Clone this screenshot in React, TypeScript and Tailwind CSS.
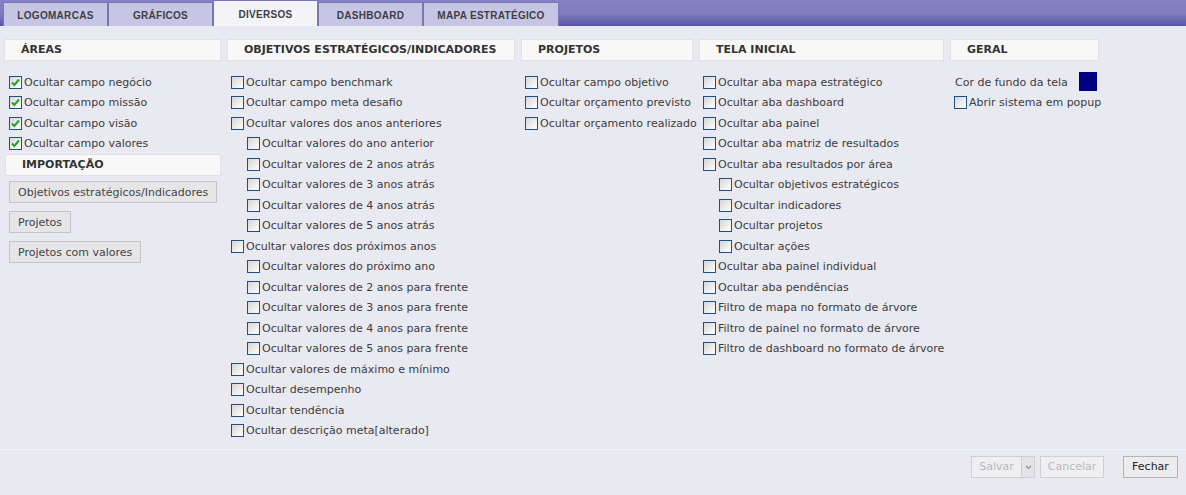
import React from 'react'

const font = { fontFamily: '"DejaVu Sans", Verdana, sans-serif' }

function Box({ checked = false }: { checked?: boolean }) {
  return (
    <span className="relative inline-block w-[13px] h-[13px] border border-[#1e4f86] bg-gradient-to-br from-[#d6d6d6] to-white shrink-0">
      {checked && (
        <svg viewBox="0 0 11 11" className="absolute left-0 top-0 w-[11px] h-[11px]">
          <path d="M2 5.5 L4.3 8 L9 2.5" fill="none" stroke="#22a02a" strokeWidth="2" />
        </svg>
      )}
    </span>
  )
}

function Row({ label, checked, sub }: { label: string; checked?: boolean; sub?: boolean }) {
  return (
    <div className={`flex items-center h-[20.5px] gap-[2px] ${sub ? 'pl-4' : ''}`}>
      <Box checked={checked} />
      <span className="whitespace-nowrap text-[11px] text-[#3c3c3c] leading-none">{label}</span>
    </div>
  )
}

function Head({ title, className = '' }: { title: string; className?: string }) {
  return (
    <div className={`h-[22px] flex items-center pl-4 bg-[#f8f8f8] border border-[#e0e0e6] text-[11px] font-bold text-[#333] ${className}`}>
      {title}
    </div>
  )
}

function Btn({ label }: { label: string }) {
  return (
    <button className="h-[22px] px-2 bg-[#e6e6e8] border border-[#c4c4c8] text-[11px] text-[#444] leading-none self-start">
      {label}
    </button>
  )
}

const tabs = ['LOGOMARCAS', 'GRÁFICOS', 'DIVERSOS', 'DASHBOARD', 'MAPA ESTRATÉGICO']

export default function App() {
  return (
    <div style={font} className="w-[1186px] h-[495px] bg-[#e9e9f1] flex flex-col overflow-hidden">
      <div className="h-[26px] bg-gradient-to-b from-[#8482c0] via-[#807ebe] to-[#5a56a8] flex items-end pl-[3px]">
        {tabs.map((t, i) => (
          <div
            key={t}
            className={`flex items-center justify-center pt-[1px] border-x border-t border-[#7876b8] text-[10px] font-bold text-[#3e3e48] tracking-[0.3px] ${
              i === 4 ? 'w-[136px]' : 'w-[105px]'
            } ${i === 2 ? 'bg-[#f3f3f8] h-[26px]' : 'bg-[#c6c6e4] h-[24px]'}`}
            style={{ fontFamily: '"Liberation Sans", Arial, sans-serif' }}
          >
            {t}
          </div>
        ))}
      </div>

      <div className="flex gap-[6px] pl-[4px] pt-[13px] h-[423px]">
        <div className="w-[217px] flex flex-col">
          <Head title="ÁREAS" />
          <div className="pl-[5px] pt-[11px] flex flex-col">
            <Row label="Ocultar campo negócio" checked />
            <Row label="Ocultar campo missão" checked />
            <Row label="Ocultar campo visão" checked />
            <Row label="Ocultar campo valores" checked />
          </div>
          <Head title="IMPORTAÇÃO" className="ml-[1px] w-[216px]" />
          <div className="pl-[5px] pt-[5px] flex flex-col gap-2">
            <Btn label="Objetivos estratégicos/Indicadores" />
            <Btn label="Projetos" />
            <Btn label="Projetos com valores" />
          </div>
        </div>

        <div className="w-[288px] flex flex-col">
          <Head title="OBJETIVOS ESTRATÉGICOS/INDICADORES" />
          <div className="pl-[4px] pt-[11px] flex flex-col">
            <Row label="Ocultar campo benchmark" />
            <Row label="Ocultar campo meta desafio" />
            <Row label="Ocultar valores dos anos anteriores" />
            <Row label="Ocultar valores do ano anterior" sub />
            <Row label="Ocultar valores de 2 anos atrás" sub />
            <Row label="Ocultar valores de 3 anos atrás" sub />
            <Row label="Ocultar valores de 4 anos atrás" sub />
            <Row label="Ocultar valores de 5 anos atrás" sub />
            <Row label="Ocultar valores dos próximos anos" />
            <Row label="Ocultar valores do próximo ano" sub />
            <Row label="Ocultar valores de 2 anos para frente" sub />
            <Row label="Ocultar valores de 3 anos para frente" sub />
            <Row label="Ocultar valores de 4 anos para frente" sub />
            <Row label="Ocultar valores de 5 anos para frente" sub />
            <Row label="Ocultar valores de máximo e mínimo" />
            <Row label="Ocultar desempenho" />
            <Row label="Ocultar tendência" />
            <Row label="Ocultar descrição meta[alterado]" />
          </div>
        </div>

        <div className="w-[172px] flex flex-col">
          <Head title="PROJETOS" />
          <div className="pl-[4px] pt-[11px] flex flex-col">
            <Row label="Ocultar campo objetivo" />
            <Row label="Ocultar orçamento previsto" />
            <Row label="Ocultar orçamento realizado" />
          </div>
        </div>

        <div className="w-[245px] flex flex-col">
          <Head title="TELA INICIAL" />
          <div className="pl-[4px] pt-[11px] flex flex-col">
            <Row label="Ocultar aba mapa estratégico" />
            <Row label="Ocultar aba dashboard" />
            <Row label="Ocultar aba painel" />
            <Row label="Ocultar aba matriz de resultados" />
            <Row label="Ocultar aba resultados por área" />
            <Row label="Ocultar objetivos estratégicos" sub />
            <Row label="Ocultar indicadores" sub />
            <Row label="Ocultar projetos" sub />
            <Row label="Ocultar ações" sub />
            <Row label="Ocultar aba painel individual" />
            <Row label="Ocultar aba pendências" />
            <Row label="Filtro de mapa no formato de árvore" />
            <Row label="Filtro de painel no formato de árvore" />
            <Row label="Filtro de dashboard no formato de árvore" />
          </div>
        </div>

        <div className="w-[149px] flex flex-col">
          <Head title="GERAL" />
          <div className="pl-[4px] pt-[10px] flex flex-col">
            <div className="flex items-center justify-between h-[21px] pl-[1px] pr-[2px]">
              <span className="text-[11px] text-[#3c3c3c] pt-[3px]">Cor de fundo da tela</span>
              <span className="w-[18px] h-[19px] bg-[#000080]" />
            </div>
            <Row label="Abrir sistema em popup" />
          </div>
        </div>
      </div>

      <div className="border-t border-[#f2f2f6] flex justify-end items-center pt-[6px] pr-[8px]">
        <div className="flex h-[22px] border border-[#cfcfd3] bg-[#efeff3]">
          <span className="w-[49px] flex items-center justify-center text-[11px] text-[#b8b8bc]">Salvar</span>
          <span className="w-[13px] border-l border-[#cfcfd3] bg-[#e4e4e8] flex items-center justify-center">
            <svg viewBox="0 0 8 6" className="w-[7px] h-[5px]">
              <path d="M1 1 L4 4 L7 1" fill="none" stroke="#888" strokeWidth="1.4" />
            </svg>
          </span>
        </div>
        <span className="ml-[5px] w-[64px] h-[22px] flex items-center justify-center border border-[#cfcfd3] bg-[#efeff3] text-[11px] text-[#b8b8bc]">
          Cancelar
        </span>
        <span className="ml-[19px] w-[55px] h-[22px] flex items-center justify-center border border-[#b4b4b8] bg-[#ececee] text-[11px] text-[#222]">
          Fechar
        </span>
      </div>
    </div>
  )
}
